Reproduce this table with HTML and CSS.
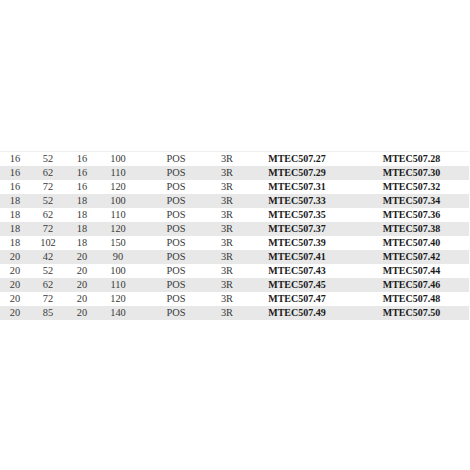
FILE: index.html
```html
<!DOCTYPE html>
<html>
<head>
<meta charset="utf-8">
<link rel="stylesheet" href="styles.css">
</head>
<body>
<div class="table">
  <div class="row"><span>16</span><span>52</span><span>16</span><span>100</span><span>POS</span><span>3R</span><b>MTEC507.27</b><b>MTEC507.28</b></div>
  <div class="row alt"><span>16</span><span>62</span><span>16</span><span>110</span><span>POS</span><span>3R</span><b>MTEC507.29</b><b>MTEC507.30</b></div>
  <div class="row"><span>16</span><span>72</span><span>16</span><span>120</span><span>POS</span><span>3R</span><b>MTEC507.31</b><b>MTEC507.32</b></div>
  <div class="row alt"><span>18</span><span>52</span><span>18</span><span>100</span><span>POS</span><span>3R</span><b>MTEC507.33</b><b>MTEC507.34</b></div>
  <div class="row"><span>18</span><span>62</span><span>18</span><span>110</span><span>POS</span><span>3R</span><b>MTEC507.35</b><b>MTEC507.36</b></div>
  <div class="row alt"><span>18</span><span>72</span><span>18</span><span>120</span><span>POS</span><span>3R</span><b>MTEC507.37</b><b>MTEC507.38</b></div>
  <div class="row"><span>18</span><span>102</span><span>18</span><span>150</span><span>POS</span><span>3R</span><b>MTEC507.39</b><b>MTEC507.40</b></div>
  <div class="row alt"><span>20</span><span>42</span><span>20</span><span>90</span><span>POS</span><span>3R</span><b>MTEC507.41</b><b>MTEC507.42</b></div>
  <div class="row"><span>20</span><span>52</span><span>20</span><span>100</span><span>POS</span><span>3R</span><b>MTEC507.43</b><b>MTEC507.44</b></div>
  <div class="row alt"><span>20</span><span>62</span><span>20</span><span>110</span><span>POS</span><span>3R</span><b>MTEC507.45</b><b>MTEC507.46</b></div>
  <div class="row"><span>20</span><span>72</span><span>20</span><span>120</span><span>POS</span><span>3R</span><b>MTEC507.47</b><b>MTEC507.48</b></div>
  <div class="row alt"><span>20</span><span>85</span><span>20</span><span>140</span><span>POS</span><span>3R</span><b>MTEC507.49</b><b>MTEC507.50</b></div>
</div>
</body>
</html>
```
FILE: styles.css
```css
html, body {
  margin: 0;
  padding: 0;
  background: #ffffff;
}
body {
  font-family: "Liberation Serif", "DejaVu Serif", serif;
  font-size: 10.4px;
  color: #3a3a3a;
}
.table {
  margin-top: 151px;
  width: 469px;
  border-top: 1px solid #f0f0f0;
}
.row {
  display: grid;
  grid-template-columns: 30px 36px 32px 40px 76px 26px 114px 115px;
  height: 14px;
  line-height: 14px;
  text-align: center;
}
.row.alt {
  background: #e8e8e8;
}
.row b {
  font-weight: bold;
  font-size: 10px;
  color: #1a1a1a;
}
```
